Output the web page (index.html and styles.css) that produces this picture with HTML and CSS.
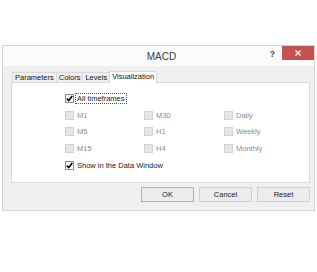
FILE: index.html
```html
<!DOCTYPE html>
<html lang="en">
<head>
  <meta charset="UTF-8">
  <title>MACD</title>
  <link rel="stylesheet" href="styles.css">
</head>
<body>
  <div class="dialog">
    <div class="titlebar">
      <span class="title">MACD</span>
      <span class="help">?</span>
      <button class="close" type="button">
        <svg width="6" height="6" viewBox="0 0 6 6"><path d="M0.5 0.5 L5.5 5.5 M5.5 0.5 L0.5 5.5" stroke="#fff" stroke-width="1.3"/></svg>
      </button>
    </div>

    <div class="content">
      <!-- Tabs -->
      <div class="tabs">
        <div class="tab">Parameters</div>
        <div class="tab">Colors</div>
        <div class="tab">Levels</div>
        <div class="tab active">Visualization</div>
      </div>

      <div class="panel">
        <div class="row">
          <label class="check"><span class="box on"></span><span class="focus">All timeframes</span></label>
        </div>
        <div class="grid">
          <label class="check off"><span class="box"></span>M1</label>
          <label class="check off"><span class="box"></span>M30</label>
          <label class="check off"><span class="box"></span>Daily</label>
          <label class="check off"><span class="box"></span>M5</label>
          <label class="check off"><span class="box"></span>H1</label>
          <label class="check off"><span class="box"></span>Weekly</label>
          <label class="check off"><span class="box"></span>M15</label>
          <label class="check off"><span class="box"></span>H4</label>
          <label class="check off"><span class="box"></span>Monthly</label>
        </div>
        <div class="row">
          <label class="check"><span class="box on"></span>Show in the Data Window</label>
        </div>
      </div>

      <div class="buttons">
        <button class="btn default" type="button">OK</button>
        <button class="btn" type="button">Cancel</button>
        <button class="btn" type="button">Reset</button>
      </div>
    </div>
  </div>
</body>
</html>
```

FILE: styles.css
```css
body {
  margin: 0;
  background: #fff;
  font-family: "Liberation Sans", Arial, sans-serif;
  font-size: 7.5px;
  color: #222;
}

.dialog {
  width: 313px;
  box-sizing: border-box;
  margin: 45px 0 0 2px;
  border: 1px solid #d4d4d4;
  background: #f0f0f0;
}

/* Title bar */
.titlebar {
  position: relative;
  height: 20px;
  background: #fbfbfb;
  display: flex;
  align-items: center;
  justify-content: center;
}

.title {
  font-size: 10px;
  color: #3a3a3a;
  margin-left: 6px;
}

.help {
  position: absolute;
  right: 39px;
  top: 3px;
  font-size: 8.5px;
  font-weight: bold;
  color: #444;
}

.close {
  position: absolute;
  right: 0;
  top: 0;
  width: 32px;
  height: 14px;
  border: none;
  padding: 0;
  background: #c75050;
  display: flex;
  align-items: center;
  justify-content: center;
}

/* Body */
.content {
  padding: 5px 4px 8px 8px;
}

.tabs {
  display: flex;
  align-items: flex-end;
  height: 11px;
  padding-left: 1px;
}

.tab {
  height: 9px;
  line-height: 9px;
  padding: 0 2px;
  border: 1px solid #d9d9d9;
  border-bottom: none;
  background: #f0f0f0;
  margin-right: -1px;
  color: #111;
}

.tab.active {
  position: relative;
  z-index: 1;
  height: 11px;
  line-height: 10px;
  margin-bottom: -1px;
  background: #fff;
  padding: 0 2px;
}

.panel {
  height: 101px;
  box-sizing: border-box;
  border: 1px solid #d9d9d9;
  background: #fff;
  padding: 7px 0 0 53px;
}

.grid {
  display: grid;
  grid-template-columns: 79px 80px 80px;
}

.check {
  display: flex;
  align-items: center;
  gap: 3px;
  height: 16.8px;
}

.check.off {
  color: #8c8c8c;
}

.box {
  width: 9px;
  height: 9px;
  box-sizing: border-box;
  border: 1px solid #d2d2d2;
  background: #e6e6e6;
}

.box.on {
  border-color: #8e8e8e;
  background: #fff url("data:image/svg+xml,%3Csvg xmlns='http://www.w3.org/2000/svg' width='7' height='7' viewBox='0 0 7 7'%3E%3Cpath d='M0.8 3.6 L2.7 5.5 L6.3 1' fill='none' stroke='%23000' stroke-width='1.6'/%3E%3C/svg%3E") no-repeat center;
}

.focus {
  border: 1px dotted #555;
  padding: 0 1px;
  margin-left: -2px;
  line-height: 9px;
}

/* Buttons */
.buttons {
  display: flex;
  justify-content: flex-end;
  gap: 5px;
  margin-top: 4px;
}

.btn {
  width: 53px;
  height: 15px;
  padding: 0;
  border: 1px solid #d0d0d0;
  background: #ececec;
  font-family: inherit;
  font-size: 7.5px;
  color: #222;
}

.btn.default {
  border-color: #8cbbe8;
}
```
